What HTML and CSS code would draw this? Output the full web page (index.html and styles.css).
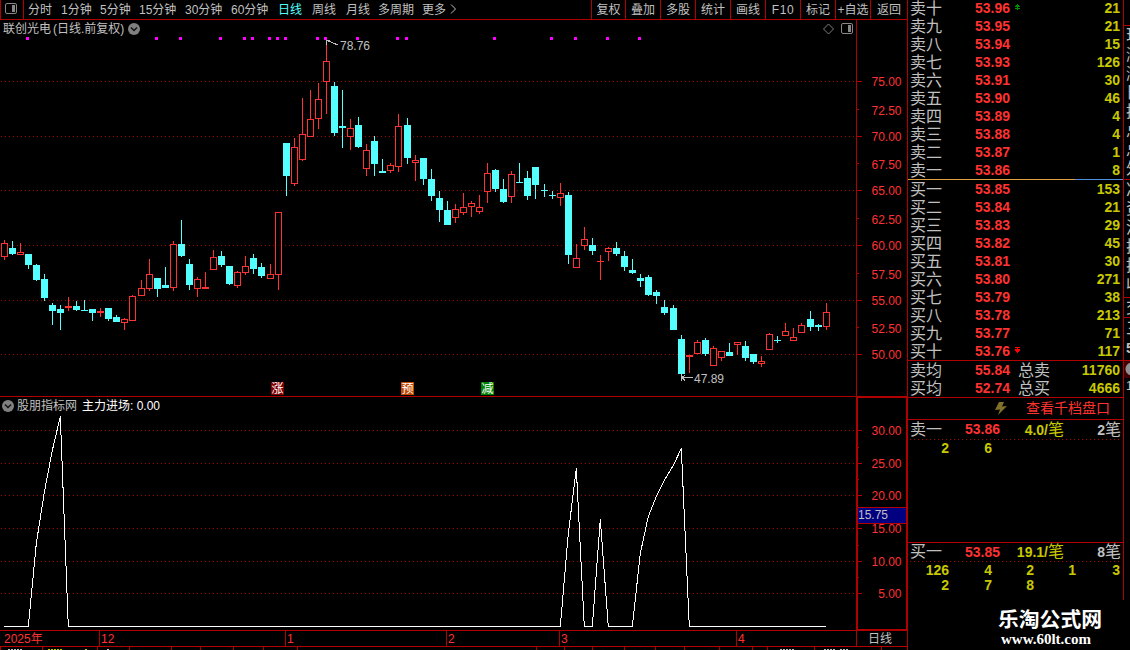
FILE: index.html
```html
<!DOCTYPE html>
<html lang="zh-CN">
<head>
    <meta charset="UTF-8">
    <title>联创光电 日线</title>
    <link rel="stylesheet" href="styles.css">
</head>
<body>
    <div class="screen">
        <main class="main">
            <nav class="toolbar">
                <div class="layout-btn">
                    <svg width="14" height="12" viewBox="0 0 14 12"><rect x="1.5" y=".5" width="11" height="10" rx="1.5" fill="none" stroke="#888"/><rect x="8" y="2" width="3" height="7" fill="#888"/></svg>
                </div>
                <div class="periods">
                    <span>分时</span>
                    <span>1分钟</span>
                    <span>5分钟</span>
                    <span>15分钟</span>
                    <span>30分钟</span>
                    <span>60分钟</span>
                    <span class="active">日线</span>
                    <span>周线</span>
                    <span>月线</span>
                    <span>多周期</span>
                    <span>更多</span>
                    <svg width="7" height="18" viewBox="0 0 7 18"><path d="M1 4.5L5.5 9L1 13.5" fill="none" stroke="#c0c0c0"/></svg>
                </div>
                <div class="tools">
                    <span>复权</span>
                    <span>叠加</span>
                    <span>多股</span>
                    <span>统计</span>
                    <span>画线</span>
                    <span class="f10">F10</span>
                    <span>标记</span>
                    <span>+自选</span>
                    <span>返回</span>
                </div>
            </nav>

            <section class="panel price-panel">
                <svg id="priceChart" width="907" height="376" viewBox="0 20 907 376"></svg>
                <header class="panel-head">
                    <span class="stock">联创光电</span><span>(日线.前复权)</span>
                    <svg class="fold" width="12" height="12" viewBox="0 0 12 12"><circle cx="6" cy="6" r="6" fill="#808080"/><path d="M3 4.5L6 7.5L9 4.5" fill="none" stroke="#111" stroke-width="1.5"/></svg>
                    <svg class="corner" width="30" height="12" viewBox="0 0 30 12"><path d="M4.5 1L9.5 6L4.5 11L-.5 6Z" fill="none" stroke="#808080"/><rect x="17.5" y=".5" width="11" height="10" rx="1.5" fill="none" stroke="#888"/><rect x="24" y="2" width="3" height="7" fill="#888"/></svg>
                </header>
            </section>

            <section class="panel indicator-panel">
                <svg id="indicatorChart" width="907" height="233" viewBox="0 397 907 233"></svg>
                <header class="panel-head">
                    <svg class="fold" width="12" height="12" viewBox="0 0 12 12"><circle cx="6" cy="6" r="6" fill="#808080"/><path d="M3 4.5L6 7.5L9 4.5" fill="none" stroke="#111" stroke-width="1.5"/></svg>
                    <span class="formula">股朋指标网</span><span class="value">主力进场: 0.00</span>
                </header>
                <span class="cursor-value">15.75</span>
            </section>

            <div class="dates">
                <span>2025年</span>
                <span>12</span>
                <span>1</span>
                <span>2</span>
                <span>3</span>
                <span>4</span>
                <span class="period">日线</span>
            </div>
            <svg id="strip" class="strip" width="907" height="3" viewBox="0 647 907 3"></svg>
        </main>

        <div class="right">
            <div class="columns">
                <aside class="book">
                    <div id="asks"></div>
                    <div class="split"></div>
                    <div id="bids"></div>
                    <div class="rule"></div>
                    <div class="row avg"><span>卖均</span><b class="price">55.84</b><span class="total">总卖</span><b class="vol">11760</b></div>
                    <div class="row avg"><span>买均</span><b class="price">52.74</b><span class="total">总买</span><b class="vol">4666</b></div>
                    <div class="rule"></div>
                    <div class="depth-link">
                        <svg width="12" height="13" viewBox="0 0 12 13"><path d="M4 0H9L7 4.5L12 4L3 13L5 7.5L0 8Z" fill="#80702a"/></svg>
                        <span>查看千档盘口</span>
                    </div>
                    <div class="rule"></div>
                    <div class="queue sell">
                        <div class="queue-head"><span>卖一</span><b class="price">53.86</b><span class="mean"><b>4.0/</b>笔</span><span class="count"><b>2</b>笔</span></div>
                        <div class="orders"><b>2</b><b>6</b></div>
                    </div>
                    <div class="rule"></div>
                    <div class="queue buy">
                        <div class="queue-head"><span>买一</span><b class="price">53.85</b><span class="mean"><b>19.1/</b>笔</span><span class="count"><b>8</b>笔</span></div>
                        <div class="orders"><b>126</b><b>4</b><b>2</b><b>1</b><b>3</b><b>2</b><b>7</b><b>8</b></div>
                    </div>
                </aside>
                <aside class="side">
                    <div class="side-group quote"><span>现</span><span>涨</span><span>涨</span><span>日</span><span>换</span><span>总</span><span>总</span><span>外</span></div>
                    <div class="side-group"><span>净</span><span>资</span><span>流</span><span>换</span><span>换</span><span>收</span></div>
                    <div class="side-group trade"><span>交</span></div>
                    <div class="side-group ticks"><span>三</span><span><b>5</b></span></div>
                    <div class="side-group last"><i></i><span>1</span></div>
                </aside>
            </div>
            <footer class="site">
                <div class="site-name">乐淘公式网</div>
                <div class="site-url">www.60lt.com</div>
            </footer>
        </div>
    </div>
    <script src="chart.js"></script>
</body>
</html>
```
FILE: styles.css
```css
* {
    box-sizing: border-box;
}

body {
    margin: 0;
    background: #000;
    color: #c0c0c0;
    font-family: "Liberation Sans", "Noto Sans CJK SC", sans-serif;
    font-size: 12px;
    overflow: hidden;
}

svg {
    display: block;
}

.screen {
    display: flex;
    width: 1130px;
    height: 650px;
    overflow: hidden;
}

.main {
    width: 908px;
    flex: none;
    border-right: 1px solid #b00000;
}

/* toolbar */
.toolbar {
    display: flex;
    height: 20px;
    line-height: 20px;
    border-bottom: 1px solid #b00000;
    white-space: nowrap;
}

.layout-btn {
    width: 24px;
    padding: 3px 0 0 3px;
    border-left: 1px solid #b00000;
    border-right: 1px solid #b00000;
}

.periods {
    display: grid;
    grid-template-columns: 33px 39px 39px 46px 46px 47px 34px 34px 32px 44px 28px 10px;
    width: 567px;
    padding-left: 4px;
}

.periods .active {
    color: #54ffff;
}

.tools {
    display: grid;
    grid-template-columns: 34px repeat(7, 35px) 37px;
    height: 19px;
    text-align: center;
}

.tools span {
    border-left: 1px solid #b00000;
}

.tools .f10 {
    letter-spacing: 0.6px;
}

/* chart panels */
.panel {
    position: relative;
    border-bottom: 1px solid #b00000;
}

.price-panel {
    height: 377px;
}

.indicator-panel {
    height: 234px;
}

.panel-head {
    position: absolute;
    top: 0;
    left: 0;
    width: 857px;
    height: 18px;
    padding: 0 3px;
    display: flex;
    align-items: center;
    line-height: 18px;
}

.stock {
    margin-right: 2px;
}

.price-panel .fold {
    margin-left: 4px;
}

.corner {
    margin-left: auto;
    overflow: visible;
}

.indicator-panel .panel-head {
    height: 17px;
    padding-left: 2px;
}

.formula {
    margin: 0 5px 0 3px;
}

.value {
    color: #fff;
}

.cursor-value {
    position: absolute;
    left: 858px;
    top: 110px;
    width: 48px;
    height: 17px;
    line-height: 15px;
    background: #000080;
    border-top: 1px solid #b00000;
    border-bottom: 1px solid #b00000;
}

.axis {
    fill: #ff3232;
    text-anchor: end;
}

.mark {
    fill: #c0c0c0;
}

.flag {
    fill: #fff;
    font-size: 12px;
    text-anchor: middle;
}

/* dates */
.dates {
    display: grid;
    grid-template-columns: 99px 186px 161px 113px 177px 120px 51px;
    height: 16px;
    line-height: 16px;
    border-bottom: 1px solid #b00000;
    color: #ff3232;
}

.dates span {
    height: 15px;
    padding-left: 1px;
    border-left: 1px solid #b00000;
}

.dates span:first-child {
    padding-left: 4px;
    border-left: 0;
}

.dates .period {
    color: #c0c0c0;
    padding-left: 11px;
}

/* order book */
.right {
    width: 222px;
}

.columns {
    display: flex;
    height: 600px;
}

.book {
    width: 216px;
    flex: none;
    margin-top: -1px;
    height: 601px;
    border-right: 1px solid #b00000;
    font-size: 16px;
}

.book b {
    font-size: 14px;
}

.row {
    display: grid;
    grid-template-columns: 65px 39px 30px 1fr;
    height: 18px;
    line-height: 18px;
    padding: 0 3px 0 2px;
    white-space: nowrap;
}

.row span {
    line-height: 20px;
}

.price {
    color: #ff3232;
}

.vol {
    color: #c8c800;
    text-align: right;
}

.row svg {
    margin-top: 5px;
}

.avg {
    grid-template-columns: 65px 43px 34px 1fr;
}

.rule {
    height: 1px;
    background: #b00000;
}

.split {
    height: 1px;
    background: linear-gradient(90deg, #e0a040 167px, #5090e0 167px);
}

.depth-link {
    display: flex;
    align-items: center;
    height: 21px;
    padding-left: 87px;
    gap: 19px;
    font-size: 14px;
    line-height: 21px;
    color: #ff3232;
}

.queue {
    height: 122px;
}

.queue-head {
    display: grid;
    grid-template-columns: 55px 36px 63px 57px;
    height: 20px;
    line-height: 19px;
    padding-left: 2px;
    white-space: nowrap;
    background: repeating-linear-gradient(90deg, #b00000 0 1px, transparent 1px 4px) 2px 19px / 210px 1px no-repeat;
}

.buy .queue-head {
    height: 19px;
    line-height: 18px;
    background-position: 2px 18px;
}

.mean,
.count {
    text-align: right;
}

.mean,
.orders {
    color: #c8c800;
}

.orders {
    display: grid;
    grid-template-columns: 41px 43px 42px 42px 44px;
    grid-auto-rows: 15px;
    line-height: 17px;
    text-align: right;
}

/* clipped quote column */
.side {
    width: 6px;
    overflow: hidden;
    font-size: 16px;
    padding-top: 25px;
}

.side-group {
    border-top: 1px solid #b00000;
    padding-left: 2px;
    height: 118px;
    line-height: 19px;
    overflow: hidden;
}

.side-group span {
    display: block;
    width: 16px;
}

.quote {
    height: 154px;
}

.trade {
    height: 20px;
}

.ticks {
    height: 43px;
    padding-top: 1px;
}

.ticks b {
    font-size: 14px;
}

.last {
    padding-left: 0;
}

.last i {
    display: block;
    height: 17px;
    background: radial-gradient(circle at 8px 8px, #909090 6px, #400000 7px);
}

.last span {
    padding-left: 2px;
    font-size: 12px;
    line-height: 16px;
}

.site {
    padding: 7px 0 0 90px;
    color: #fff;
    font-weight: bold;
}

.site-name {
    font-size: 20.8px;
    line-height: 25px;
}

.site-url {
    padding-left: 3px;
    font-family: "Liberation Serif", serif;
    font-size: 15px;
    line-height: 15px;
}
```
FILE: chart.js
```js
const RED = '#ff3232';
const CYAN = '#54ffff';
const LINE = '#b00000';

// x, high, body top, body bottom, low, up
const candles = [
    [4,240,243,257,260,1], [12,241,248,254,255,0], [20,243,252,255,255,1], [28,254,254,265,269,0],
    [36,264,265,280,281,0], [44,274,279,298,301,0], [52,303,305,311,325,0], [60,305,309,313,330,0],
    [68,297,306,308,311,1], [76,301,306,310,311,0], [84,300,310,311,311,0], [92,309,309,313,321,0],
    [100,308,311,313,317,1], [108,308,308,319,321,0], [116,315,317,322,322,0], [124,318,319,323,330,1],
    [132,295,296,321,321,1], [141,280,288,296,296,1], [149,259,274,289,291,1], [157,278,278,289,297,0],
    [165,267,285,288,288,0], [173,241,244,288,291,1], [181,220,244,256,257,0], [189,259,264,285,290,0],
    [197,277,279,289,297,1], [205,272,287,289,289,1], [213,250,257,270,270,1], [221,251,256,265,267,0],
    [229,266,266,284,285,0], [237,271,272,286,288,1], [245,256,266,273,275,1], [253,254,258,269,274,0],
    [261,263,267,276,278,0], [270,264,274,279,279,1], [278,212,212,275,290,1], [286,143,143,176,196,0],
    [294,138,147,184,186,1], [302,98,134,160,161,1], [310,90,119,137,137,1], [318,83,99,119,129,1],
    [326,41,61,82,114,1], [334,82,86,133,136,0], [342,90,126,128,148,0], [350,119,128,137,150,1],
    [358,117,125,147,148,0], [366,144,150,169,176,1], [374,136,141,164,176,0], [382,159,171,173,173,0],
    [390,163,165,171,173,1], [398,114,126,167,172,1], [407,118,125,158,164,0], [415,155,160,163,181,1],
    [423,158,158,179,185,0], [431,169,179,196,201,0], [439,191,198,210,222,0], [447,201,210,225,225,0],
    [455,204,209,218,223,1], [463,193,207,213,215,1], [471,201,203,207,217,1], [479,195,207,212,214,1],
    [487,163,173,192,203,1], [495,169,170,189,192,0], [503,179,189,202,203,0], [511,171,174,197,203,1],
    [519,163,182,183,183,0], [527,171,178,196,200,0], [535,167,167,185,199,0], [544,184,190,191,197,0],
    [552,191,195,196,199,0], [560,183,193,198,206,1], [568,192,195,255,264,0], [576,244,258,268,268,1],
    [584,227,239,246,250,1], [592,238,245,251,255,0], [600,255,261,262,280,1], [608,247,248,252,261,1],
    [616,242,248,254,256,0], [624,251,256,267,271,0], [632,259,270,273,274,0], [640,274,278,281,287,0],
    [648,275,277,295,296,0], [656,290,292,296,304,0], [664,300,307,313,315,0], [673,305,308,330,330,0],
    [681,335,339,374,378,0], [689,355,355,357,373,1], [697,340,342,354,354,1], [705,338,340,354,356,0],
    [713,346,348,366,366,1], [721,351,351,358,361,1], [729,343,352,356,356,0], [737,342,342,345,355,1],
    [745,341,346,358,361,0], [753,354,354,362,364,0], [761,356,361,364,367,1], [769,333,334,350,350,1],
    [777,336,340,341,343,0], [785,323,331,336,336,1], [793,328,337,341,341,1], [801,323,325,333,333,1],
    [810,311,319,327,331,0], [818,324,325,327,331,0], [826,303,312,327,330,1]
];

const dots = [26, 155, 179, 219, 243, 251, 268, 276, 284, 316, 324, 356, 396, 405, 493, 550, 574, 606, 638];

const rect = (x, y, w, h, fill) => `<rect x="${x}" y="${y}" width="${w}" height="${h}" fill="${fill}"/>`;
const text = (x, y, cls, s) => `<text x="${x}" y="${y}" class="${cls}">${s}</text>`;
const grid = y => `<path d="M1 ${y + 0.5}H856" stroke="#a00000" stroke-dasharray="1 3"/>`;

function drawPrice() {
    let out = '';
    [81, 136, 190, 245, 300, 354].forEach(y => {
        out += grid(y) + rect(857, y, 5, 1, LINE);
    });
    [109, 163, 218, 273, 327].forEach(y => out += rect(857, y, 2, 1, LINE));
    out += rect(856, 20, 1, 376, LINE);

    const labelY = [86, 114.5, 141, 169, 195, 223.5, 250, 278.5, 305, 333, 359];
    labelY.forEach((y, i) => out += text(901.5, y, 'axis', (75 - i * 2.5).toFixed(2)));

    dots.forEach(x => out += rect(x, 37, 3, 3, '#ff00ff'));

    candles.forEach(([x, high, top, bottom, low, up]) => {
        const color = up ? RED : CYAN;
        out += rect(x, high, 1, low - high, color);
        out += rect(x - 3, top, 7, bottom - top, color);
        if (up && bottom - top > 2) {
            out += rect(x - 2, top + 1, 5, bottom - top - 2, '#000');
        }
    });

    // high and low marks
    out += '<path d="M326.5 45V40.5H330M327 40.5L338 45M681.5 374V381M682 377.5H693M682 377.5L685 375M682 377.5L685 380.5" fill="none" stroke="#c0c0c0"/>';
    out += text(340, 50, 'mark', '78.76') + text(694, 383, 'mark', '47.89');

    [[271, '涨', '#800000'], [401, '预', '#c04800'], [481, '减', '#008000']].forEach(([x, s, c]) => {
        out += rect(x, 382, 13, 13, c) + text(x + 6.5, 393, 'flag', s);
    });
    document.getElementById('priceChart').innerHTML = `<g shape-rendering="crispEdges">${out}</g>`;
}

function drawIndicator() {
    let out = '';
    [430, 463, 495, 528, 561, 593].forEach((y, i) => {
        out += grid(y) + rect(858, y, 4, 1, LINE);
        out += text(901.5, y + 5, 'axis', (30 - i * 5).toFixed(2));
    });
    [447, 479, 545, 577].forEach(y => out += rect(858, y, 1, 1, LINE));
    out += rect(856, 397, 2, 233, LINE) + rect(906, 397, 1, 233, LINE);
    out += rect(856, 397, 51, 1, LINE) + rect(856, 629, 51, 1, LINE);

    const points = '4,626 28,626 36,543 44,492 52,450 60,416 68,626 560,626 568,533 576,468 584,626 592,626 600,519 608,626 632,626 640,553 648,516 656,496 664,480 673,465 681,448 689,626 826,626';
    out += `<polyline points="${points}" transform="translate(.3 .5)" fill="none" stroke="#fff"/>`;
    document.getElementById('indicatorChart').innerHTML = `<g shape-rendering="crispEdges">${out}</g>`;
}

// tops of the index bar, cut off by the window edge
function drawStrip() {
    let out = '';
    [0, 42, 97, 129, 171, 200, 233, 263, 297, 536, 564, 592, 624, 655, 684, 719, 752, 767, 814, 881].forEach(x => {
        out += rect(x, 647, 1, 3, LINE);
    });
    [[8, 22, '#c0c0c0'], [48, 62, '#c8c800'], [85, 87, '#c8c800'], [107, 108, '#c0c0c0'], [780, 794, '#c0c0c0'], [824, 834, '#c0c0c0'], [840, 848, '#c0c0c0']].forEach(([a, b, c]) => {
        for (let x = a; x < b; x += 3) out += rect(x, 649, 2, 1, c);
    });
    document.getElementById('strip').innerHTML = out;
}

function fillRows(id, side, levels, prices, volumes) {
    document.getElementById(id).innerHTML = prices.map((p, i) => {
        let arrow = '<i></i>';
        if (p === '53.96') {
            arrow = '<svg width="7" height="7" viewBox="0 0 7 7"><path d="M3 0H4V1H5V2H6V3H4V4H6V5H4V6H3V5H1V4H3V3H1V2H2V1H3Z" fill="#009000"/></svg>';
        } else if (p === '53.76') {
            arrow = '<svg width="7" height="7" viewBox="0 0 7 7"><path d="M1 0H6V1H4V2H6V4H5V5H4V6H3V5H2V4H1V2H3V1H1Z" fill="#f00"/></svg>';
        }
        return `<div class="row"><span>${side}${levels[i]}</span><b class="price">${p}</b>${arrow}<b class="vol">${volumes[i]}</b></div>`;
    }).join('');
}

drawPrice();
drawIndicator();
drawStrip();
fillRows('asks', '卖', '十九八七六五四三二一',
    ['53.96', '53.95', '53.94', '53.93', '53.91', '53.90', '53.89', '53.88', '53.87', '53.86'],
    [21, 21, 15, 126, 30, 46, 4, 4, 1, 8]);
fillRows('bids', '买', '一二三四五六七八九十',
    ['53.85', '53.84', '53.83', '53.82', '53.81', '53.80', '53.79', '53.78', '53.77', '53.76'],
    [153, 21, 29, 45, 30, 271, 38, 213, 71, 117]);
```
